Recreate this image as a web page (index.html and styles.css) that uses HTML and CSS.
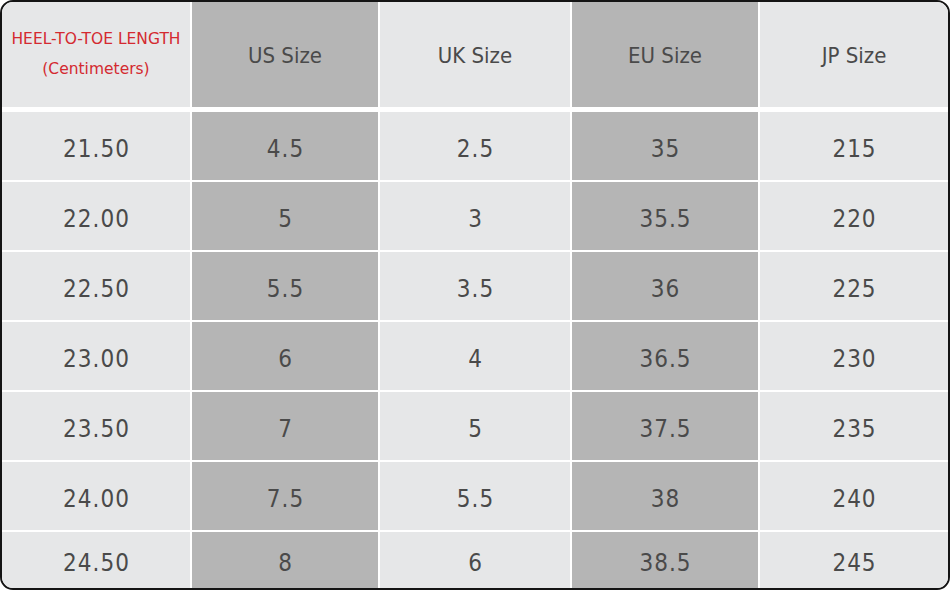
FILE: index.html
```html
<!DOCTYPE html>
<html>
<head>
<meta charset="utf-8">
<link rel="stylesheet" href="styles.css">
</head>
<body>
<div class="chart">
  <div class="head grid">
    <div class="cell first"><span class="red">HEEL-TO-TOE LENGTH</span><span class="red">(Centimeters)</span></div>
    <div class="cell dark">US Size</div>
    <div class="cell">UK Size</div>
    <div class="cell dark">EU Size</div>
    <div class="cell">JP Size</div>
  </div>
  <div class="body grid">
    <div class="cell">21.50</div><div class="cell dark">4.5</div><div class="cell">2.5</div><div class="cell dark">35</div><div class="cell">215</div>
    <div class="cell">22.00</div><div class="cell dark">5</div><div class="cell">3</div><div class="cell dark">35.5</div><div class="cell">220</div>
    <div class="cell">22.50</div><div class="cell dark">5.5</div><div class="cell">3.5</div><div class="cell dark">36</div><div class="cell">225</div>
    <div class="cell">23.00</div><div class="cell dark">6</div><div class="cell">4</div><div class="cell dark">36.5</div><div class="cell">230</div>
    <div class="cell">23.50</div><div class="cell dark">7</div><div class="cell">5</div><div class="cell dark">37.5</div><div class="cell">235</div>
    <div class="cell">24.00</div><div class="cell dark">7.5</div><div class="cell">5.5</div><div class="cell dark">38</div><div class="cell">240</div>
    <div class="cell">24.50</div><div class="cell dark">8</div><div class="cell">6</div><div class="cell dark">38.5</div><div class="cell">245</div>
  </div>
</div>
</body>
</html>
```
FILE: styles.css
```css
html, body {
  margin: 0;
  padding: 0;
  background: #ffffff;
}
.chart {
  box-sizing: border-box;
  width: 950px;
  height: 590px;
  border: 2px solid #141414;
  border-radius: 13px;
  overflow: hidden;
  background: #ffffff;
}
.grid {
  display: grid;
  grid-template-columns: 188px 186px 190px 186px 188px;
  column-gap: 2px;
  row-gap: 2px;
}
.head {
  grid-template-rows: 105px;
}
.body {
  margin-top: 5px;
  grid-template-rows: repeat(6, 68px) 56px;
}
.cell {
  background: #e6e7e8;
  display: flex;
  align-items: center;
  justify-content: center;
  color: #4a4a4a;
}
.cell.dark {
  background: #b5b5b5;
}
.head .cell {
  font-family: "DejaVu Sans Condensed", "DejaVu Sans", sans-serif;
  font-stretch: semi-condensed;
  font-size: 22px;
  padding-top: 2px;
}
.head .first {
  flex-direction: column;
  padding-top: 0;
  padding-bottom: 2px;
}
.red {
  font-family: "DejaVu Sans", sans-serif;
  font-stretch: normal;
  color: #d42a30;
  font-size: 15.5px;
  line-height: 30px;
}
.body .cell {
  font-family: "DejaVu Sans Condensed", "DejaVu Sans", sans-serif;
  font-stretch: semi-condensed;
  font-size: 24px;
  letter-spacing: 1px;
  padding-top: 5px;
  padding-left: 1px;
}
```
